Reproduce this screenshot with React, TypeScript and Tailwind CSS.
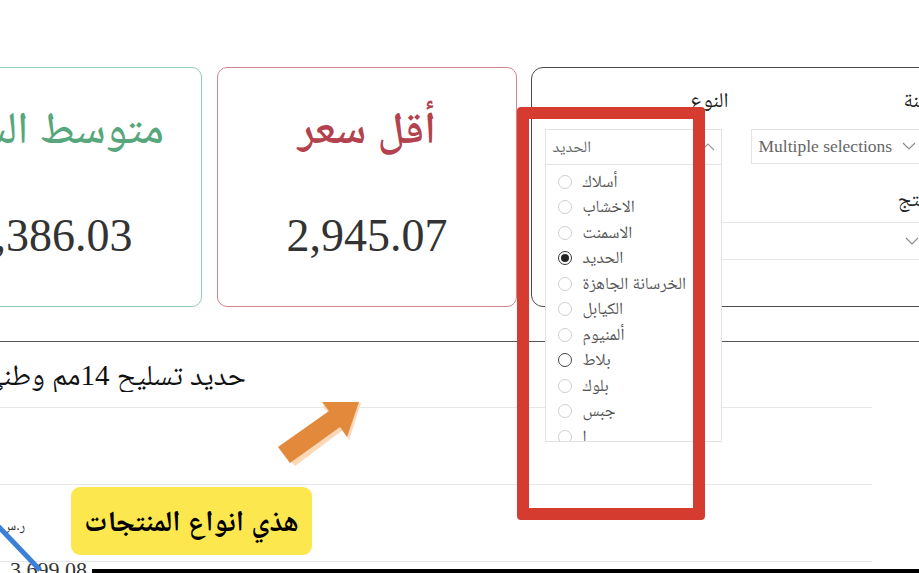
import React from "react";

const items = [
  { t: "أسلاك", s: "off" },
  { t: "الاخشاب", s: "off" },
  { t: "الاسمنت", s: "off" },
  { t: "الحديد", s: "on" },
  { t: "الخرسانة الجاهزة", s: "off" },
  { t: "الكيابل", s: "off" },
  { t: "ألمنيوم", s: "off" },
  { t: "بلاط", s: "hover" },
  { t: "بلوك", s: "off" },
  { t: "جبس", s: "off" },
  { t: "ا", s: "off" },
];

function ChevronDown() {
  return (
    <svg width="14" height="8" viewBox="0 0 14 8" fill="none">
      <polyline points="1,1 7,7 13,1" stroke="#8a8a8a" strokeWidth="1.1" />
    </svg>
  );
}

function ChevronUp() {
  return (
    <svg width="14" height="8" viewBox="0 0 14 8" fill="none">
      <polyline points="1,7 7,1 13,7" stroke="#9a9a9a" strokeWidth="1.1" />
    </svg>
  );
}

function Radio({ s }: { s: string }) {
  if (s === "on") {
    return (
      <span className="flex h-[14px] w-[14px] shrink-0 items-center justify-center rounded-full border border-[#333]">
        <span className="h-[8px] w-[8px] rounded-full bg-[#222]" />
      </span>
    );
  }
  return (
    <span
      className={
        s === "hover"
          ? "h-[14px] w-[14px] shrink-0 rounded-full border border-[#444]"
          : "h-[14px] w-[14px] shrink-0 rounded-full border border-[#cfcfcf]"
      }
    />
  );
}

export default function App() {
  return (
    <div className="relative h-[573px] w-[919px] overflow-hidden bg-white font-['Liberation_Serif','Noto_Naskh_Arabic','Noto_Sans_Arabic','DejaVu_Sans',serif]">
      {/* cards row */}
      <div className="flex items-start pt-[67px]">
        {/* green card */}
        <div className="ml-[-98px] flex h-[240px] w-[300px] shrink-0 flex-col items-center rounded-[10px] border-[1.5px] border-[#93cdb3]">
          <div className="mt-[32px] whitespace-nowrap text-[45px] font-medium leading-[56px] text-[#58a67c]" dir="rtl">
            متوسط السعر
          </div>
          <div className="mt-[52px] text-[46px] leading-[56px] text-[#333]">3,386.03</div>
        </div>
        {/* red card */}
        <div className="ml-[15px] flex h-[240px] w-[300px] shrink-0 flex-col items-center rounded-[10px] border-[1.5px] border-[#d4848f]">
          <div className="mt-[32px] whitespace-nowrap text-[45px] font-semibold leading-[56px] text-[#b3424f]" dir="rtl">
            أقل سعر
          </div>
          <div className="mt-[52px] text-[46px] leading-[56px] text-[#333]">2,945.07</div>
        </div>
        {/* filter card */}
        <div className="relative z-10 ml-[14px] h-[240px] w-[426px] shrink-0 rounded-[12px] border-[1.5px] border-[#4a4a4a] px-[12.5px] pt-[19px]">
          <div className="flex gap-[22px]">
            <div className="w-[184px] shrink-0">
              <div className="text-right text-[21px] leading-[26px] text-[#222]" dir="rtl">
                النوع
              </div>
              <div className="mt-[15.5px] flex h-[36px] w-[177px] items-center justify-between border border-[#e3e3e3] pl-[7px] pr-[6px]">
                <span className="text-[16px] text-[#666]">الحديد</span>
                <ChevronUp />
              </div>
            </div>
            <div className="w-[192px] shrink-0">
              <div className="text-right text-[21px] leading-[26px] text-[#222]" dir="rtl">
                السنة
              </div>
              <div className="mt-[15.5px] flex h-[35px] items-center justify-between border border-[#e3e3e3] pl-[7px] pr-[26px]">
                <span className="whitespace-nowrap text-[17.5px] text-[#666]">Multiple selections</span>
                <ChevronDown />
              </div>
            </div>
          </div>
          <div className="mt-[21px] text-right text-[21px] leading-[26px] text-[#222]" dir="rtl">
            المنتج
          </div>
          <div className="mt-[10px] flex h-[38px] items-center justify-end border border-[#e6e6e6] pr-[24px]">
            <ChevronDown />
          </div>

          {/* open dropdown list */}
          <div className="absolute left-[12.5px] top-[96px] z-20 h-[278px] w-[177px] overflow-hidden border border-[#e3e3e3] bg-white pt-[4px]">
            {items.map((it, i) => (
              <div key={i} className="flex h-[25.5px] items-center gap-[11px] pl-[12px]">
                <Radio s={it.s} />
                <span className="whitespace-nowrap text-[17px] leading-[20px] text-[#555]" dir="rtl">
                  {it.t}
                </span>
              </div>
            ))}
          </div>
        </div>
      </div>

      {/* table section */}
      <div className="mt-[34px] border-t border-[#555]">
        <div className="w-[872px]">
          <div className="flex h-[66px] items-center border-b border-[#e6e6e6]">
            <div className="flex w-[246px] justify-end overflow-hidden whitespace-nowrap">
              <span className="text-[29px] leading-[34px] text-[#111]" dir="rtl">
                حديد تسليح 14مم وطني
              </span>
            </div>
          </div>
          <div className="h-[77px] border-b border-[#e6e6e6]" />
          <div className="h-[77px] border-b border-[#e6e6e6] pl-[2px] pt-[28px]">
            <span className="text-[14px] leading-[16px] text-[#333]" dir="rtl">ر.س</span>
          </div>
          <div className="mt-[-3px] pl-[10px] text-[22px] leading-[22px] text-[#333]">3,699.08</div>
        </div>
      </div>

      {/* blue chart line */}
      <svg className="absolute left-0 top-[520px]" width="60" height="60" viewBox="0 0 60 60">
        <line x1="-4" y1="4" x2="40" y2="50" stroke="#3b7fd6" strokeWidth="5" />
      </svg>

      {/* bottom black edge */}
      <div className="absolute bottom-0 left-[92px] right-0 h-[4px] bg-black" />

      {/* red annotation rectangle */}
      <div className="absolute left-[517px] top-[107px] z-30 h-[413px] w-[188px] rounded-[4px] border-[12px] border-[#d63b30]" />

      {/* orange arrow */}
      <svg className="absolute left-0 top-0 z-30" width="919" height="573" viewBox="0 0 919 573" fill="none">
        <polygon
          points="361,403 349,440 343,430 295,466 281,450 330,414 322,406"
          fill="#fbd9b8"
        />
        <polygon
          points="359,402 347,437 340,427 290,463 278,447 329,411 322,402"
          fill="#e3893c"
        />
      </svg>

      {/* yellow label */}
      <div className="absolute left-[71px] top-[487px] z-30 flex h-[68px] w-[241px] items-center justify-center rounded-[9px] bg-[#fce84e]">
        <span className="whitespace-nowrap text-[29px] font-bold leading-[40px] text-black" dir="rtl">
          هذي انواع المنتجات
        </span>
      </div>
    </div>
  );
}
